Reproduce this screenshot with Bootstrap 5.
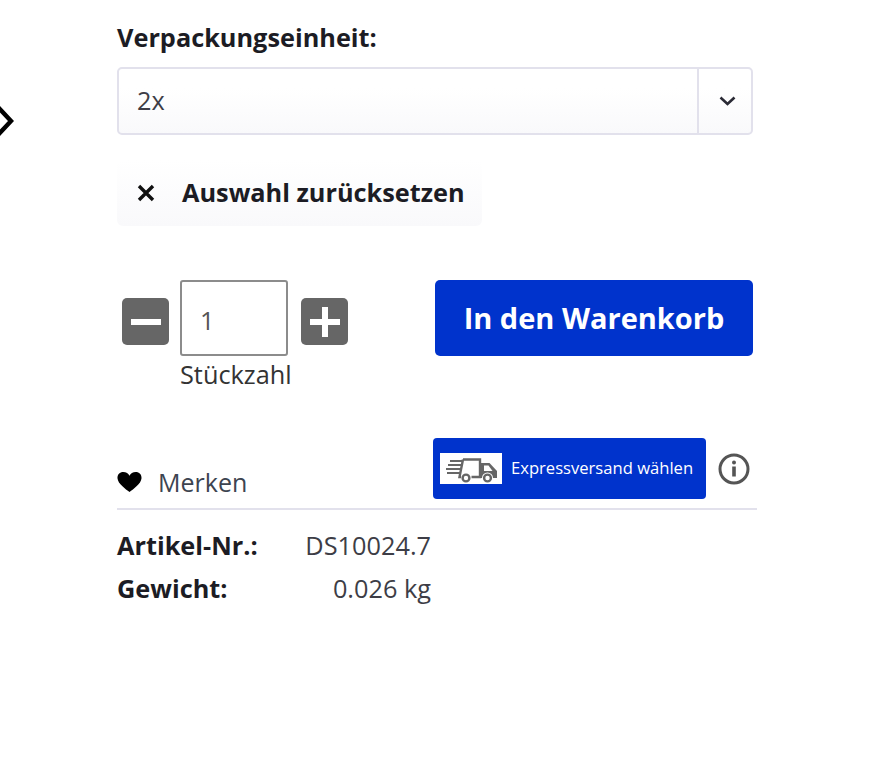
<!DOCTYPE html>
<html lang="de">
<head>
<meta charset="utf-8">
<title>Produkt</title>
<link href="https://cdn.jsdelivr.net/npm/bootstrap@5.3.0/dist/css/bootstrap.min.css" rel="stylesheet">
<style>
body{font-family:"Open Sans",sans-serif;color:#333;background:#fff;font-size:24px;overflow:hidden}
.buybox{position:relative;width:893px;height:767px;padding:21px 140px 0 117px}
.slide-arrow{position:absolute;left:-14px;top:103px;width:30px;height:36px}
.unit-label{font-size:25.3px;line-height:32px;font-weight:700;color:#1c1c24;margin:0 0 14px}
.unit-select{width:636px;height:68px;border:2px solid #e2e1ec;border-radius:5px;background:linear-gradient(#fff 30%,#f9f9fb)}
.unit-value{padding-left:18px;font-size:25.3px;color:#3d3d46;flex:1}
.unit-caret{width:54px;padding-left:5px;border-left:2px solid #e2e1ec}
.reset-btn{width:365px;height:66px;margin-top:25px;padding:0 0 0 20px;background:linear-gradient(#fff,#f9f9fb);border-radius:6px;border:0;font-size:25.3px;font-weight:700;color:#1c1c24}
.reset-btn svg{margin-right:27px}
.buy-row{margin-top:54px;width:636px}
.qty-btn{width:47px;height:47px;background:#666;border-radius:5px;border:0;padding:0;margin-top:18px}
.qty-minus{margin-left:5px;margin-right:11px}
.qty-plus{margin-left:13px}
.qty-col{width:108px}
.qty-input{height:76px;border:2px solid #8c8c8c;border-radius:3px;padding-left:18px;font-size:25.3px;color:#555;line-height:76px}
.qty-label{font-size:25.3px;line-height:32px;color:#333;margin-top:2px;white-space:nowrap}
.cart-btn{width:318px;height:76px;background:#0033cc;border:0;border-radius:5px;color:#fff;font-size:29px;font-weight:700;padding:0}
.extra-row{width:640px;margin-top:49px;height:71px;border-bottom:2px solid #e2e1ec}
.save-link{font-size:25px;color:#3d4450;line-height:32px;margin-top:27px}
.save-link svg{margin-right:16px}
.express-btn{width:273px;height:61px;background:#0033cc;border:0;border-radius:4px;color:#fff;font-size:16.6px;padding:0 0 0 7px}
.truck-box{width:62px;height:31px;background:#fff;margin-right:9px}
.express-side{margin-left:auto;margin-right:7px;margin-top:-1px}
.info-icon{margin-left:12px;margin-top:15px}
.spec-line{width:314px;font-size:25.3px;line-height:32px;color:#3d3d46}
.spec-line b{font-weight:700;color:#1c1c24}
.spec-first{margin-top:19px}
.spec-next{margin-top:11px}
</style>
</head>
<body class="m-0">
<div class="buybox">
  <svg class="slide-arrow" viewBox="0 0 30 36" aria-hidden="true"><path d="M12 4 L25 18 L12 32" fill="none" stroke="#000" stroke-width="4.4"/></svg>
  <div class="unit-label">Verpackungseinheit:</div>
  <div class="unit-select d-flex align-items-stretch">
    <div class="unit-value d-flex align-items-center">2x</div>
    <div class="unit-caret d-flex align-items-center justify-content-center">
      <svg width="17" height="10" viewBox="0 0 17 10" aria-hidden="true"><path d="M1.5 1.5 L8.5 8 L15.5 1.5" fill="none" stroke="#2a2a35" stroke-width="2.6"/></svg>
    </div>
  </div>
  <button type="button" class="reset-btn btn d-flex align-items-center">
    <svg width="18" height="18" viewBox="0 0 18 18" aria-hidden="true"><path d="M2 2 L16 16 M16 2 L2 16" stroke="#111" stroke-width="3.4"/></svg>
    <span>Auswahl zurücksetzen</span>
  </button>
  <div class="buy-row d-flex align-items-start">
    <button type="button" class="qty-btn qty-minus btn d-flex align-items-center justify-content-center" aria-label="weniger">
      <svg width="30" height="6" viewBox="0 0 30 6" aria-hidden="true"><rect width="30" height="6" fill="#fff"/></svg>
    </button>
    <div class="qty-col">
      <div class="qty-input">1</div>
      <div class="qty-label">Stückzahl</div>
    </div>
    <button type="button" class="qty-btn qty-plus btn d-flex align-items-center justify-content-center" aria-label="mehr">
      <svg width="30" height="30" viewBox="0 0 30 30" aria-hidden="true"><path d="M12 0h6v12h12v6H18v12h-6V18H0v-6h12z" fill="#fff"/></svg>
    </button>
    <button type="button" class="cart-btn btn ms-auto">In den Warenkorb</button>
  </div>
  <div class="extra-row d-flex align-items-start">
    <div class="save-link d-flex align-items-center">
      <svg width="25" height="22" viewBox="0 0 26 22" aria-hidden="true"><path d="M13 21.5 C9 18 1 13 .5 7 C.2 3 3 .5 6.5 .5 C9.5 .5 12 2.2 13 4.5 C14 2.2 16.5 .5 19.5 .5 C23 .5 25.8 3 25.5 7 C25 13 17 18 13 21.5Z" fill="#000"/></svg>
      <span>Merken</span>
    </div>
    <div class="express-side d-flex align-items-start">
      <button type="button" class="express-btn btn d-flex align-items-center">
        <span class="truck-box d-flex">
          <svg width="62" height="31" viewBox="0 0 62 31" aria-hidden="true">
            <path d="M10 8H23M8 12H22M6 16H21M7 20H20" stroke="#666" stroke-width="2.2" fill="none"/>
            <path d="M23 6.5H40V24H31.5M21 24H19.5L23 6.5" fill="none" stroke="#666" stroke-width="2.4"/>
            <path d="M41 10H49.5L57 18V25H53A5.5 5.5 0 0 0 42 25H41Z" fill="#666"/>
            <path d="M44 12.5H48.5L52.5 18H44Z" fill="#fff"/>
            <circle cx="26" cy="25" r="3.4" fill="#fff" stroke="#666" stroke-width="2.4"/>
            <circle cx="47.5" cy="25" r="3.4" fill="#fff" stroke="#666" stroke-width="2.4"/>
          </svg>
        </span>
        <span>Expressversand wählen</span>
      </button>
      <svg class="info-icon" width="32" height="32" viewBox="0 0 32 32" aria-hidden="true">
        <circle cx="16" cy="16" r="14" fill="none" stroke="#555" stroke-width="3"/>
        <circle cx="16" cy="9.5" r="2" fill="#555"/><rect x="14.2" y="13.5" width="3.6" height="10" fill="#555"/>
      </svg>
    </div>
  </div>
  <div class="spec-line spec-first d-flex justify-content-between"><b>Artikel-Nr.:</b><span>DS10024.7</span></div>
  <div class="spec-line spec-next d-flex justify-content-between"><b>Gewicht:</b><span>0.026 kg</span></div>
</div>
</body>
</html>
